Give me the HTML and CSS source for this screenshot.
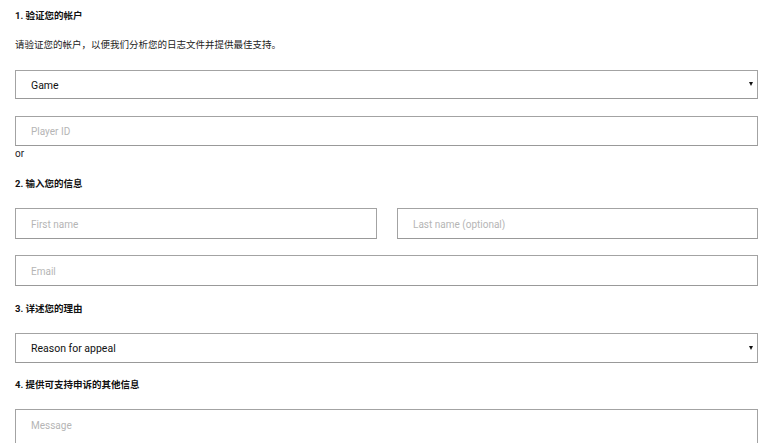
FILE: index.html
```
<!DOCTYPE html>
<html lang="zh-CN">
<head>
<meta charset="utf-8">
<title>Appeal</title>
<link rel="stylesheet" href="styles.css">
</head>
<body>
<form class="form">
  <div class="heading h1">1. 验证您的帐户</div>
  <div class="desc">请验证您的帐户，以便我们分析您的日志文件并提供最佳支持。</div>
  <div class="select-wrap sel1">
    <select class="field select"><option>Game</option></select>
    <span class="arrow"></span>
  </div>
  <input class="field input pid" type="text" placeholder="Player ID">
  <div class="or">or</div>
  <div class="heading h2">2. 输入您的信息</div>
  <div class="row">
    <input class="field input" type="text" placeholder="First name">
    <input class="field input" type="text" placeholder="Last name (optional)">
  </div>
  <input class="field input email" type="text" placeholder="Email">
  <div class="heading h3">3. 详述您的理由</div>
  <div class="select-wrap sel2">
    <select class="field select"><option>Reason for appeal</option></select>
    <span class="arrow"></span>
  </div>
  <div class="heading h4">4. 提供可支持申诉的其他信息</div>
  <textarea class="field textarea" placeholder="Message"></textarea>
</form>
</body>
</html>
```
FILE: styles.css
```
* { box-sizing: border-box; }
html, body { margin: 0; padding: 0; background: #fff; overflow: hidden; }
body { font-family: Roboto, "Noto Sans CJK SC", sans-serif; color: #111; }
.form {
  display: flex;
  flex-direction: column;
  padding: 10px 1px 0 15px;
  width: 759px;
}
.heading {
  font-family: Roboto, "Noto Sans CJK SC", sans-serif;
  font-size: 9.5px;
  font-weight: 700;
  line-height: 12px;
  height: 12px;
  color: #111;
}
.desc {
  font-family: Roboto, "Noto Sans CJK SC", sans-serif;
  font-size: 9.5px;
  line-height: 12px;
  height: 12px;
  margin-top: 17px;
  color: #222;
}
.field {
  display: block;
  width: 100%;
  border: 1px solid #a3a3a3;
  border-bottom-color: #999;
  border-radius: 0;
  background: #fff;
  font-family: Roboto, sans-serif;
  outline: none;
  margin: 0;
}
.input {
  height: 30px;
  padding: 1px 15px 0;
  font-size: 10px;
  color: #333;
}
.input::placeholder, .textarea::placeholder { color: #b5b5b5; }
.select-wrap { position: relative; }
.select {
  -webkit-appearance: none;
  appearance: none;
  height: 29px;
  padding: 1px 15px 0;
  font-size: 10.5px;
  color: #111;
}
.arrow {
  position: absolute;
  right: 5px;
  top: 12px;
  width: 0;
  height: 0;
  border-left: 2.5px solid transparent;
  border-right: 2.5px solid transparent;
  border-top: 4px solid #111;
}
.sel1 { margin-top: 19px; }
.pid { margin-top: 17px; }
.or {
  font-size: 10px;
  line-height: 12px;
  height: 14px;
  padding-top: 2px;
  color: #222;
}
.h2 { margin-top: 18px; }
.row {
  display: flex;
  gap: 20px;
  margin-top: 18px;
}
.row .input { height: 31px; flex: 0 0 362px; }
.row .input + .input { flex: 1 1 auto; width: auto; }
.email { margin-top: 16px; height: 31px; }
.h3 { margin-top: 17px; }
.sel2 { margin-top: 18px; }
.sel2 .select { height: 30px; }
.sel2 .arrow { top: 13px; }
.h4 { margin-top: 16px; }
.textarea {
  margin-top: 18px;
  height: 80px;
  padding: 10px 15px;
  font-size: 10px;
  resize: none;
}
```
